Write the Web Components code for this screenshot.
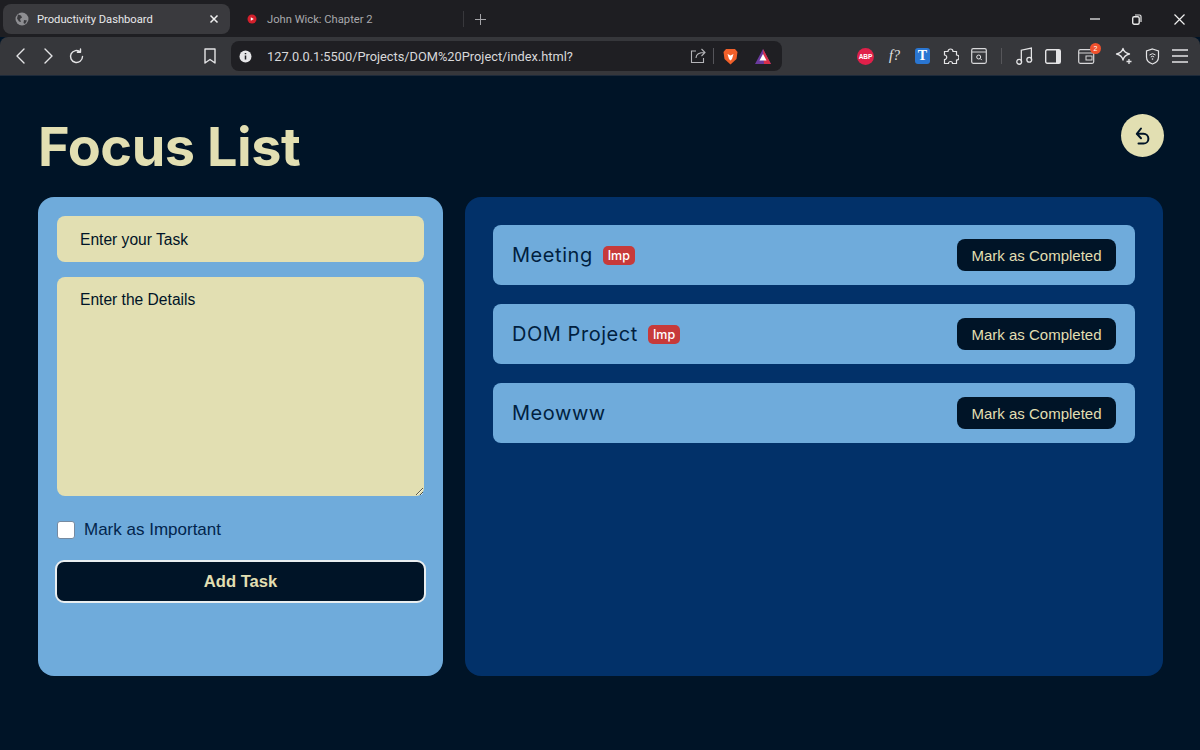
<!DOCTYPE html>
<html lang="en">
<head>
<meta charset="utf-8">
<title>Productivity Dashboard</title>
<style>
  html, body { margin: 0; height: 100%; background: #001427; }
  body { display: flex; flex-direction: column; height: 750px; overflow: hidden; font-family: "Liberation Sans", Arial, sans-serif; }
</style>
</head>
<body>
<browser-tabs></browser-tabs>
<browser-toolbar></browser-toolbar>
<focus-page>
  <task-form slot="form"></task-form>
  <task-list slot="list">
    <task-item name="Meeting" important></task-item>
    <task-item name="DOM Project" important></task-item>
    <task-item name="Meowww"></task-item>
  </task-list>
</focus-page>

<script>
// BROWSER TABS //
class BrowserTabs extends HTMLElement {
  connectedCallback() {
    this.attachShadow({mode: 'open'}).innerHTML = `
      <style>
        :host { display: flex; align-items: center; height: 37px; flex: none; background: #1e1e22; color: #d6d6d8; font: 11.2px "Roboto", "Liberation Sans", sans-serif; padding: 4px 0 3px 3px; box-sizing: border-box; }
        .tab { display: flex; align-items: center; height: 30px; box-sizing: border-box; }
        .active { width: 227px; background: #3a3a3e; border-radius: 8px; padding: 0 11px 0 12px; color: #e8e8ea; }
        .active span { flex: 1; margin-left: 8px; }
        .other { width: 233px; padding-left: 37px; color: #a9a9ad; position: relative; }
        .other svg.fav { position: absolute; left: 17px; top: 10px; }
        .sep { width: 1px; height: 16px; background: #38383c; }
        .plus { margin-left: 11px; display: flex; }
        .win { margin-left: auto; display: flex; align-items: center; gap: 32px; padding-right: 15px; height: 30px; }
      </style>
      <div class="tab active">
        <svg width="14" height="14" viewBox="0 0 14 14"><circle cx="7" cy="7" r="6.5" fill="#8e8e92"/><path d="M3 2.5l3 1 1 2-2 1.5 1 3-2-.5-2-3zM9 8l3 .5-2 3.500-1.500-1z" fill="#3a3a3e"/></svg>
        <span>Productivity Dashboard</span>
        <svg width="10" height="10" viewBox="0 0 10 10"><path d="M1.500 1.500l7 7M8.500 1.500l-7 7" stroke="#f0f0f0" stroke-width="1.500"/></svg>
      </div>
      <div class="tab other">
        <svg class="fav" width="10" height="10" viewBox="0 0 10 10"><circle cx="5" cy="5" r="4.500" fill="#d3202c"/><path d="M3.800 3.200l3 1.800-3 1.800z" fill="#fff"/></svg>
        <span>John Wick: Chapter 2</span>
      </div>
      <div class="sep"></div>
      <div class="plus"><svg width="11" height="11" viewBox="0 0 11 11"><path d="M5.500 0v11M0 5.500h11" stroke="#a4a4a8" stroke-width="1"/></svg></div>
      <div class="win">
        <svg width="10" height="10" viewBox="0 0 10 10"><path d="M0 5h10" stroke="#e8e8e8" stroke-width="1.300"/></svg>
        <svg width="10" height="11" viewBox="0 0 10 11"><rect x=".7" y="2.700" width="6.500" height="7.500" rx="1.500" fill="none" stroke="#e8e8e8" stroke-width="1.400"/><path d="M3 1h4.500a1.500 1.500 0 0 1 1.500 1.500V8" fill="none" stroke="#e8e8e8" stroke-width="1.200"/></svg>
        <svg width="11" height="11" viewBox="0 0 11 11"><path d="M.5.500l10 10M10.500.500l-10 10" stroke="#f0f0f0" stroke-width="1.200"/></svg>
      </div>
    `;
  }
}

// BROWSER TOOLBAR //
class BrowserToolbar extends HTMLElement {
  connectedCallback() {
    const stroke = 'fill="none" stroke="#e4e4e6" stroke-width="1.400" stroke-linecap="round" stroke-linejoin="round"';
    this.attachShadow({mode: 'open'}).innerHTML = `
      <style>
        :host { display: flex; align-items: center; flex: none; height: 39px; box-sizing: border-box; background: #36373b; border-radius: 8px 8px 0 0; border-bottom: 1px solid #1d2a3a; }
        .nav { display: flex; align-items: center; width: 231px; flex: none; padding-left: 15px; box-sizing: border-box; }
        svg { display: block; flex: none; }
        .url { width: 551px; flex: none; height: 30px; background: #1f1f23; border-radius: 8px; display: flex; align-items: center; box-sizing: border-box; padding: 0 11px 0 8px; color: #d8d8da; font: 12.8px "Roboto", "Liberation Sans", sans-serif; }
        .url .addr { margin-left: 15px; flex: 1; }
        .url .bar { width: 1px; height: 16px; background: #55555a; margin: 0 9px 0 7px; }
        .ext { flex: 1; display: flex; align-items: center; position: relative; height: 100%; }
        .ext > * { position: absolute; }
        .abp { left: 75px; width: 17px; height: 17px; border-radius: 50%; background: #e0204a; color: #fff; font: bold 6.500px "Liberation Sans", sans-serif; display: flex; align-items: center; justify-content: center; }
        .fq { left: 107px; color: #e8e8e8; font: italic 14px "Liberation Serif", serif; }
        .t { left: 133px; width: 15px; height: 16px; border-radius: 3px; background: #2a76d2; color: #fff; font: bold 14px "Liberation Serif", serif; display: flex; align-items: center; justify-content: center; }
        .badge { left: 308px; top: 6px; width: 11px; height: 11px; border-radius: 50%; background: #f0512d; color: #fff; font: 7px "Liberation Sans", sans-serif; display: flex; align-items: center; justify-content: center; }
      </style>
      <div class="nav">
        <svg width="11" height="16" viewBox="0 0 11 16"><path d="M9 1L2 8l7 7" ${stroke}/></svg>
        <svg style="margin-left:17px" width="11" height="16" viewBox="0 0 11 16"><path d="M2 1l7 7-7 7" ${stroke}/></svg>
        <svg style="margin-left:14px" width="17" height="17" viewBox="0 0 17 17"><path d="M14.500 8.500a6 6 0 1 1-2-4.500M12.500 1v3.200H9.400" ${stroke}/></svg>
        <svg style="margin-left:119px" width="12" height="16" viewBox="0 0 12 16"><path d="M1 1h10v14l-5-3.500L1 15z" ${stroke}/></svg>
      </div>
      <div class="url">
        <svg width="13" height="13" viewBox="0 0 13 13"><circle cx="6.500" cy="6.500" r="6" fill="#e6e6e8"/><path d="M6.500 5.500v4M6.500 3v1.300" stroke="#1f1f23" stroke-width="1.500"/></svg>
        <span class="addr">127.0.0.1:5500/Projects/DOM%20Project/index.html?</span>
        <svg width="16" height="16" viewBox="0 0 16 16"><path d="M6 3H1.500v11.500h12V10M6 10c0-4 3-5.500 9-5.500M11.500 1L15 4.500 11.500 8" fill="none" stroke="#b4b4b8" stroke-width="1.100"/></svg>
        <div class="bar"></div>
        <svg width="15" height="17" viewBox="0 0 15 17"><path d="M3 1h9l2.500 3-1 7-6 5.500-6-5.500-1-7z" fill="#f1602a"/><path d="M4.500 6l3 1.500 3-1.500-1.500 5-1.500 1.500L6 11z" fill="#fff"/></svg>
        <svg style="margin-left:17px" width="16" height="15" viewBox="0 0 16 15"><path d="M8 0l8 15H0z" fill="#6a3a9e"/><path d="M8 0l8 15H9z" fill="#d8304a"/><path d="M8 5l3.500 6.500h-7z" fill="#fff"/></svg>
      </div>
      <div class="ext">
        <span class="abp">ABP</span>
        <span class="fq">f?</span>
        <span class="t">T</span>
        <svg style="left:160px" width="17" height="17" viewBox="0 0 17 17"><path d="M6 3.500a2.500 2.500 0 0 1 5 0h3.500v3.500a2.500 2.500 0 0 1 0 5v3.500h-4a2 2 0 0 0-4 0h-4v-4a2.200 2.200 0 0 0 0-4.500v-3.500z" fill="none" stroke="#e4e4e6" stroke-width="1.200"/></svg>
        <svg style="left:189px" width="16" height="16" viewBox="0 0 16 16"><rect x=".7" y=".7" width="14.600" height="14.600" rx="1.500" fill="none" stroke="#d8d8da" stroke-width="1.200"/><path d="M1 4h14" stroke="#d8d8da"/><circle cx="7.700" cy="9" r="2" fill="none" stroke="#e4e4e6"/><path d="M9.300 10.600l1.500 1.500" stroke="#e4e4e6"/></svg>
        <div style="left:219px;width:1px;height:16px;background:#56565a"></div>
        <svg style="left:234px" width="17" height="18" viewBox="0 0 16 17"><path d="M5 14V3l9.500-2v11" fill="none" stroke="#e4e4e6" stroke-width="1.200"/><circle cx="3" cy="14" r="2.300" fill="none" stroke="#e4e4e6" stroke-width="1.200"/><circle cx="12.500" cy="12" r="2.300" fill="none" stroke="#e4e4e6" stroke-width="1.200"/></svg>
        <svg style="left:263px" width="16" height="15" viewBox="0 0 16 15"><rect x=".7" y=".7" width="14.600" height="13.600" rx="1.500" fill="none" stroke="#e4e4e6" stroke-width="1.400"/><rect x="11" y="1" width="4" height="13" fill="#e4e4e6"/></svg>
        <svg style="left:296px" width="17" height="15" viewBox="0 0 17 15"><rect x=".7" y=".7" width="15" height="13.600" rx="1.500" fill="none" stroke="#d8d8da" stroke-width="1.200"/><path d="M1 4h14" stroke="#d8d8da"/><rect x="8" y="7" width="6" height="4" fill="none" stroke="#d8d8da"/></svg>
        <span class="badge">2</span>
        <svg style="left:333px" width="18" height="18" viewBox="0 0 18 18"><path d="M8 1.500c.8 3 2.500 4.500 6.500 5.500-4 1-5.700 2.500-6.500 6-.8-3.500-2.500-5-6.500-6 4-1 5.700-2.500 6.500-5.500z" fill="none" stroke="#e4e4e6" stroke-width="1.300" stroke-linejoin="round"/><path d="M14 12v5M11.500 14.500h5" stroke="#e4e4e6" stroke-width="1.300"/></svg>
        <svg style="left:363px" width="15" height="17" viewBox="0 0 15 17"><path d="M7.500 1l6 2v6c0 3.500-3 6-6 7-3-1-6-3.500-6-7V3z" fill="none" stroke="#e4e4e6" stroke-width="1.200"/><path d="M4.500 7a4.500 4.500 0 0 1 6 0M5.800 9a2.500 2.500 0 0 1 3.400 0" fill="none" stroke="#e4e4e6"/><circle cx="7.500" cy="11" r=".8" fill="#e4e4e6"/></svg>
        <svg style="left:390px" width="16" height="14" viewBox="0 0 16 14"><path d="M0 1h16M0 7h16M0 13h16" stroke="#e4e4e6" stroke-width="1.300"/></svg>
      </div>
    `;
  }
}

// PAGE LAYOUT //
class FocusPage extends HTMLElement {
  connectedCallback() {
    this.attachShadow({mode: 'open'}).innerHTML = `
      <style>
        :host { display: flex; flex-direction: column; flex: 1; min-height: 0; box-sizing: border-box; padding: 0 37px 74px 38px; background: #001427; font-family: "Inter", "Liberation Sans", sans-serif; }
        header { display: flex; justify-content: space-between; align-items: flex-start; height: 121px; flex: none; }
        h1 { margin: 41px 0 0; color: #e2dfb2; font: 700 54px/60px "Inter", "Liberation Sans", sans-serif; letter-spacing: -.45px; }
        .back { width: 43px; height: 43px; margin: 38px -1px 0 0; border-radius: 50%; border: 0; padding: 0; background: #e2dfb2; display: flex; align-items: center; justify-content: center; }
        main { flex: 1; display: flex; gap: 22px; min-height: 0; }
        ::slotted([slot="form"]) { width: 405px; flex: none; }
        ::slotted([slot="list"]) { flex: 1; }
      </style>
      <header>
        <h1>Focus List</h1>
        <button class="back" aria-label="Back">
          <svg width="16" height="18" viewBox="0 0 16 18"><path d="M2.500 6.800h6a4.900 4.900 0 0 1 0 9.800H3.500" fill="none" stroke="#001427" stroke-width="2" stroke-linecap="round"/><path d="M6 1.500L1.800 6.800 6 11.200" fill="none" stroke="#001427" stroke-width="2" stroke-linejoin="round" stroke-linecap="round"/></svg>
        </button>
      </header>
      <main>
        <slot name="form"></slot>
        <slot name="list"></slot>
      </main>
    `;
  }
}

// TASK FORM //
class TaskForm extends HTMLElement {
  connectedCallback() {
    this.attachShadow({mode: 'open'}).innerHTML = `
      <style>
        :host { display: block; box-sizing: border-box; background: #6fabdb; border-radius: 16px; padding: 19px 19px 0; }
        input[type=text], textarea { display: block; width: 100%; box-sizing: border-box; border: 0; outline: 0; border-radius: 8px; background: #e2dfb2; color: #001427; padding: 0 23px; font: 15.6px "Liberation Sans", sans-serif; margin: 0; }
        input[type=text] { height: 46px; padding-top: 2px; }
        textarea { height: 219px; margin-top: 15px; padding-top: 14px; resize: vertical; }
        ::placeholder { color: #001427; opacity: 1; }
        label { display: flex; align-items: center; gap: 9px; margin-top: 25px; height: 18px; color: #02254d; font: 17px "Liberation Sans", sans-serif; }
        input[type=checkbox] { appearance: none; width: 18px; height: 18px; margin: 0; background: #fff; border: 1px solid #768aa0; border-radius: 3px; box-sizing: border-box; }
        button { display: block; width: 371px; height: 43px; margin: 21px 0 0 -2px; background: #001427; color: #e2dfb2; border: 2px solid #e9eef0; border-radius: 9px; font: bold 16.6px "Liberation Sans", sans-serif; }
      </style>
      <input type="text" placeholder="Enter your Task">
      <textarea placeholder="Enter the Details"></textarea>
      <label><input type="checkbox">Mark as Important</label>
      <button type="button">Add Task</button>
    `;
  }
}

// TASK LIST //
class TaskList extends HTMLElement {
  connectedCallback() {
    this.attachShadow({mode: 'open'}).innerHTML = `
      <style>
        :host { display: flex; flex-direction: column; gap: 19px; box-sizing: border-box; background: #023169; border-radius: 16px; padding: 28px; }
      </style>
      <slot></slot>
    `;
  }
}

// TASK ITEM //
class TaskItem extends HTMLElement {
  connectedCallback() {
    const imp = this.hasAttribute('important') ? '<span class="imp">Imp</span>' : '';
    this.attachShadow({mode: 'open'}).innerHTML = `
      <style>
        :host { display: flex; align-items: center; height: 60px; flex: none; box-sizing: border-box; padding: 0 19px; background: #6fabdb; border-radius: 8px; }
        h3 { margin: 0; font: 400 20px "Inter", "Liberation Sans", sans-serif; color: #011f40; letter-spacing: .55px; }
        .imp { margin-left: 10px; background: #c73a3a; color: #fff; border-radius: 5px; font: 500 12.5px/15px "Inter", "Liberation Sans", sans-serif; padding: 2px 5px; }
        button { margin-left: auto; width: 159px; height: 32px; padding: 1px 0 0; border: 0; border-radius: 8px; background: #001427; color: #e2dfb2; font: 15px "Liberation Sans", sans-serif; }
      </style>
      <h3>${this.getAttribute('name')}</h3>${imp}
      <button type="button">Mark as Completed</button>
    `;
  }
}

customElements.define('browser-tabs', BrowserTabs);
customElements.define('browser-toolbar', BrowserToolbar);
customElements.define('focus-page', FocusPage);
customElements.define('task-form', TaskForm);
customElements.define('task-list', TaskList);
customElements.define('task-item', TaskItem);
</script>
</body>
</html>
